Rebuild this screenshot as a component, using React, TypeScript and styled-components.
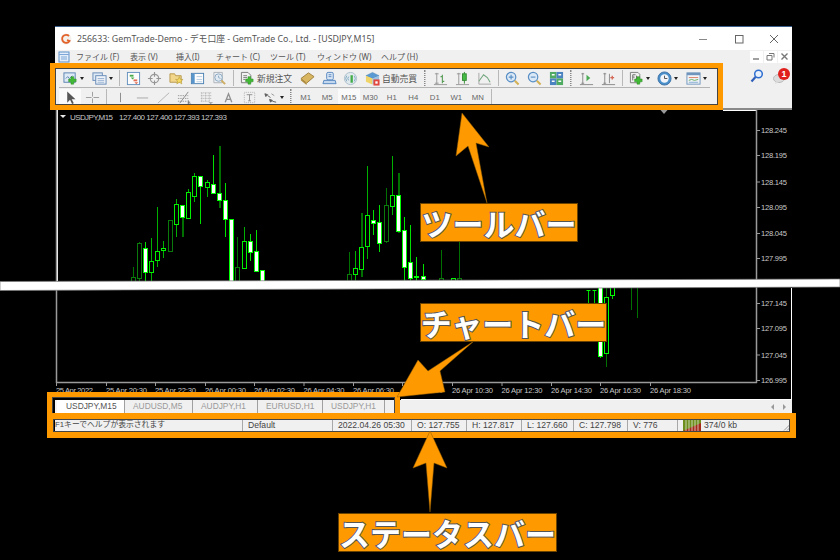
import React from "react";
import styled, { createGlobalStyle } from "styled-components";

const ORANGE = "#ff9900";
const UI_FONT = `"Noto Sans", "Noto Sans CJK JP", sans-serif`;

const GlobalStyle = createGlobalStyle`
  html, body {
    margin: 0;
    padding: 0;
    background: #000;
    width: 840px;
    height: 560px;
    overflow: hidden;
  }
`;

const Page = styled.div`
  position: relative;
  width: 840px;
  height: 560px;
  background: #000;
  padding: 26px 0 0 55px;
  box-sizing: border-box;
  font-family: ${UI_FONT};
`;

const Window = styled.div`
  width: 737px;
  display: flex;
  flex-direction: column;
`;

const TitleBar = styled.div`
  height: 24px;
  background: #fff;
  border-top: 1px solid #3a5f8c;
  box-sizing: border-box;
  display: flex;
  align-items: center;
  padding-left: 5px;
  font-size: 8.8px;
  color: #555;
`;

const TitleText = styled.span`
  margin-left: 5px;
  flex: 1;
  white-space: nowrap;
`;

const WinControl = styled.div`
  width: 35.5px;
  height: 23px;
  display: flex;
  align-items: center;
  justify-content: center;
`;

const MenuBar = styled.div`
  height: 13px;
  background: #f0f0f0;
  display: flex;
  align-items: center;
  padding-left: 3px;
  font-size: 8px;
  color: #555;
`;

const MenuItem = styled.div<{ $w: number }>`
  width: ${(p) => p.$w}px;
  white-space: nowrap;
`;

const MdiButtons = styled.div`
  margin-left: auto;
  display: flex;
  gap: 1px;
  padding-right: 1px;
`;

const MdiButton = styled.div`
  width: 13px;
  height: 12px;
  background: #fff;
  display: flex;
  align-items: center;
  justify-content: center;
`;

const ToolArea = styled.div`
  height: 47px;
  background: #f0f0f0;
  border-bottom: 2px solid #8a8a8a;
  box-sizing: border-box;
  display: flex;
`;

const ToolRows = styled.div`
  width: 655px;
  padding: 6px 0 0 4px;
  display: flex;
  flex-direction: column;
`;

const ToolRow = styled.div<{ $w: number; $line?: boolean }>`
  width: ${(p) => p.$w}px;
  height: 18px;
  display: flex;
  align-items: center;
  flex-shrink: 0;
  border-bottom: ${(p) => (p.$line ? "1px solid #b4b4b4" : "none")};
`;

const ToolButton = styled.div<{ $w: number; $active?: boolean }>`
  width: ${(p) => p.$w}px;
  height: 17px;
  flex-shrink: 0;
  display: flex;
  align-items: center;
  justify-content: center;
  gap: 2px;
  font-size: 8.8px;
  color: #555;
  background: ${(p) => (p.$active ? "#fafafa" : "transparent")};
  white-space: nowrap;

  svg {
    width: 15px;
    height: 15px;
    opacity: 0.85;
  }
`;

const Period = styled(ToolButton)`
  font-family: "Liberation Sans", sans-serif;
  font-size: 7.8px;
  color: #666;
`;

const Separator = styled.div`
  width: 1px;
  height: 16px;
  background: #b8b8b8;
  margin: 0 2.5px;
  flex-shrink: 0;
`;

const Grip = styled.div`
  width: 2px;
  height: 16px;
  margin: 0 3px;
  flex-shrink: 0;
  border-left: 1px dotted #888;
  border-right: 1px dotted #bbb;
  box-sizing: border-box;
`;

const DropArrow = styled.span`
  width: 0;
  height: 0;
  border-left: 2.5px solid transparent;
  border-right: 2.5px solid transparent;
  border-top: 3px solid #222;
`;

const ToolEnd = styled.div`
  flex: 1;
  display: flex;
  padding: 6px 0 0 36px;
  gap: 9px;
  align-items: flex-start;
`;

const Bubble = styled.div`
  width: 15px;
  height: 14px;
  display: flex;
  position: relative;
`;

const Badge = styled.div`
  position: absolute;
  top: -1px;
  right: -2px;
  width: 12px;
  height: 12px;
  border-radius: 50%;
  background: #e0201c;
  color: #fff;
  font: bold 9px/12px "Liberation Sans", sans-serif;
  text-align: center;
`;

const ChartArea = styled.div`
  height: 290px;
  background: #000;
  line-height: 0;
`;

const TabBar = styled.div`
  height: 13px;
  background: #f0f0f0;
  display: flex;
  font: 8.4px/13px "Liberation Sans", sans-serif;
`;

const Tab = styled.div<{ $w: number; $active?: boolean }>`
  width: ${(p) => p.$w}px;
  box-sizing: border-box;
  padding-left: ${(p) => (p.$active ? 9 : 8)}px;
  background: ${(p) => (p.$active ? "#fff" : "#f0f0f0")};
  color: ${(p) => (p.$active ? "#555" : "#999")};
  border-right: 1px solid #a0a0a0;
  white-space: nowrap;
`;

const TabLead = styled.div`
  width: 2px;
  background: #f4f4f4;
`;

const TabScroll = styled.div`
  margin-left: auto;
  display: flex;
  align-items: center;
  gap: 9px;
  padding-right: 6px;
`;

const ScrollArrow = styled.span<{ $right?: boolean }>`
  width: 0;
  height: 0;
  border-top: 3px solid transparent;
  border-bottom: 3px solid transparent;
  border-left: ${(p) => (p.$right ? "3px solid #999" : "none")};
  border-right: ${(p) => (p.$right ? "none" : "3px solid #999")};
`;

const StatusBar = styled.div`
  margin-top: 6px;
  height: 12px;
  background: #f0f0f0;
  display: flex;
  font: 8.6px/12px "Liberation Sans", "Noto Sans CJK JP", sans-serif;
  color: #444;
`;

const StatusCell = styled.div<{ $w: number; $last?: boolean }>`
  width: ${(p) => p.$w}px;
  flex-shrink: 0;
  box-sizing: border-box;
  padding-left: 5px;
  border-right: ${(p) => (p.$last ? "none" : "1px solid #a8a8a8")};
  white-space: nowrap;
  display: flex;
  align-items: center;
  gap: 3px;
`;

const HelpCell = styled(StatusCell)`
  padding-left: 0;
  font-family: "Liberation Sans", "Noto Sans CJK JP", sans-serif;
  font-size: 7.8px;
`;

const StatusGrip = styled.div`
  margin-left: auto;
  align-self: flex-end;
  line-height: 0;
`;

// annotations laid over the screenshot
const Frame = styled.div<{ $x: number; $y: number; $w: number; $h: number; $b: number }>`
  position: absolute;
  left: ${(p) => p.$x}px;
  top: ${(p) => p.$y}px;
  width: ${(p) => p.$w}px;
  height: ${(p) => p.$h}px;
  box-sizing: border-box;
  border: ${(p) => p.$b}px solid ${ORANGE};
  box-shadow: inset 0 0 0 1px #444;
`;

const Callout = styled.div<{ $x: number; $y: number; $w: number }>`
  position: absolute;
  left: ${(p) => p.$x}px;
  top: ${(p) => p.$y}px;
  width: ${(p) => p.$w}px;
  height: 39px;
  box-sizing: border-box;
  background: ${ORANGE};
  border: 1px solid #6b4300;
  display: flex;
  align-items: center;
  justify-content: center;
  font: 700 31px/37px "Noto Sans CJK JP", sans-serif;
  color: #fff;
  white-space: nowrap;
  -webkit-text-stroke: 2px #555;
  paint-order: stroke fill;
`;

const Overlay = styled.svg`
  position: absolute;
  left: 0;
  top: 0;
  width: 840px;
  height: 560px;
  pointer-events: none;
`;

const AxisText = styled.text`
  font: 7.6px "Liberation Sans", sans-serif;
  fill: #c8c8c8;
`;

const HeaderText = styled.text`
  font: 8px "Liberation Sans", sans-serif;
  fill: #c8c8c8;
`;

const Plus = ({ x = 7, y = 7 }: { x?: number; y?: number }) => (
  <path
    d={`M${x + 2.5} ${y}h3v2.5h2.5v3h-2.5v2.5h-3v-2.5h-2.5v-3h2.5z`}
    fill="#22b014"
    stroke="#0e7a08"
    strokeWidth=".5"
  />
);

const Svg = ({ children, size = 16 }: { children: React.ReactNode; size?: number }) => (
  <svg width={size} height={size} viewBox="0 0 16 16" fill="none">
    {children}
  </svg>
);

const icons: Record<string, React.ReactNode> = {
  newChart: (
    <Svg>
      <rect x="1" y="2" width="12" height="10" fill="#dce9f7" stroke="#3f6fa8" />
      <path d="M3 8l2-2 2 2 3-3" stroke="#3f6fa8" />
      <Plus x={6} y={6} />
    </Svg>
  ),
  profiles: (
    <Svg>
      <rect x="1" y="2" width="10" height="8" fill="#dce9f7" stroke="#4d78ad" />
      <rect x="4" y="5" width="11" height="9" fill="#eef4fb" stroke="#4d78ad" />
      <path d="M6 8h7M6 10h7M6 12h7" stroke="#8aa8cc" />
    </Svg>
  ),
  market: (
    <Svg>
      <rect x="1.5" y="1.5" width="13" height="13" fill="#fff" stroke="#4a7fb5" />
      <path d="M4 4h4v2h-4z" fill="#2ca02c" />
      <path d="M5 7l2 2 2-2z" fill="#2ca02c" />
      <path d="M8 9h4v2h-4z" fill="#e0583c" />
      <path d="M9 12l2 2 2-2z" fill="#e0583c" />
    </Svg>
  ),
  navigator: (
    <Svg>
      <circle cx="8" cy="8" r="4.5" stroke="#8c8c8c" strokeWidth="1.3" />
      <path d="M8 1v5M8 10v5M1 8h5M10 8h5" stroke="#858585" strokeWidth="1.2" />
    </Svg>
  ),
  folderStar: (
    <Svg>
      <path d="M1 3h5l1 2h6v7H1z" fill="#f2d27a" stroke="#b08a30" />
      <path d="M11 6l1.3 3H15l-2.2 1.8.9 3-2.7-1.8-2.7 1.8.9-3L7 9h2.7z" fill="#f6d548" stroke="#a88a1c" strokeWidth=".6" />
    </Svg>
  ),
  terminal: (
    <Svg>
      <rect x="1.5" y="2.5" width="13" height="11" fill="#fff" stroke="#2f6ea8" />
      <rect x="2" y="3" width="3" height="10" fill="#3d86c6" />
      <path d="M7 6h6M7 9h6M7 11.5h6" stroke="#a9c4de" />
    </Svg>
  ),
  tester: (
    <Svg>
      <path d="M2 1.5h9v11H2z" fill="#eef2f6" stroke="#a0a8b0" />
      <circle cx="7" cy="7" r="4" fill="#dfeaf4" stroke="#7a9cb8" />
      <path d="M7 5v2l2 1" stroke="#7a9cb8" />
      <path d="M10 10l4 4" stroke="#c6a24a" strokeWidth="2" />
    </Svg>
  ),
  newOrder: (
    <Svg>
      <path d="M1.5 1.5h7l3 3v8h-10z" fill="#f2f2f2" stroke="#666" />
      <path d="M3.5 5h4M3.5 7h4M3.5 9h2" stroke="#666" />
      <Plus x={6} y={6} />
    </Svg>
  ),
  gold: (
    <Svg>
      <path d="M1 8l8-6 6 4-8 7z" fill="#d6ac4a" stroke="#8f6b1c" />
      <path d="M1 8l6 5v2l-6-5z" fill="#a57f26" />
    </Svg>
  ),
  mail: (
    <Svg>
      <rect x="5" y="1.5" width="7" height="8" rx="1.5" fill="#d8e6f6" stroke="#3a73b8" />
      <path d="M7 4h3M7 6h3" stroke="#3a73b8" />
      <path d="M2 10h12l1 3.5H1z" fill="#bcd4ee" stroke="#3a73b8" />
    </Svg>
  ),
  signal: (
    <Svg>
      <circle cx="8" cy="8" r="6.5" fill="#dfe9ef" stroke="#9fb6c4" />
      <path d="M4 5a5 5 0 0 0 0 6M6 6a3 3 0 0 0 0 4M12 5a5 5 0 0 1 0 6" stroke="#6b9bb8" />
      <path d="M8 4.5h2.5v8H8z" fill="#26a02e" />
    </Svg>
  ),
  auto: (
    <Svg>
      <path d="M1 5l7-3.5 7 3.5-7 3z" fill="#3f8cd0" stroke="#2c6aa3" strokeWidth=".5" />
      <path d="M1 5l7 3v6.5l-7-3z" fill="#f0d050" />
      <path d="M15 5l-7 3v6.5l7-3z" fill="#8fbbe2" />
      <rect x="9" y="9" width="6.5" height="6.5" fill="#e02a20" />
      <rect x="11" y="11" width="2.5" height="2.5" fill="#fff" />
    </Svg>
  ),
  bars: (
    <Svg>
      <path d="M4 2v12M2 3h4M2 13h4M1 14.5h14" stroke="#8a8a8a" />
      <path d="M10 4v9M8 6h2M10 11h2" stroke="#3f8f3f" strokeWidth="1.2" />
    </Svg>
  ),
  candle: (
    <Svg>
      <path d="M4 2v12M2 3h4M1 14.5h14" stroke="#8a8a8a" />
      <rect x="8" y="3" width="4" height="7" fill="#28b428" stroke="#137a13" />
      <path d="M10 1v2M10 10v3.5" stroke="#137a13" />
    </Svg>
  ),
  line: (
    <Svg>
      <path d="M2 2v12h13" stroke="#9a9a9a" />
      <path d="M2 11l5-7 4 3 3 5" stroke="#5d9a6a" strokeWidth="1.1" />
    </Svg>
  ),
  zoomIn: (
    <Svg>
      <circle cx="6.5" cy="6.5" r="5" fill="#d8e8f8" stroke="#3f7fbf" strokeWidth="1.3" />
      <path d="M4 6.5h5M6.5 4v5" stroke="#3f7fbf" strokeWidth="1.2" />
      <path d="M10.5 10.5l4 4" stroke="#cfa83c" strokeWidth="2.2" />
    </Svg>
  ),
  zoomOut: (
    <Svg>
      <circle cx="6.5" cy="6.5" r="5" fill="#d8e8f8" stroke="#3f7fbf" strokeWidth="1.3" />
      <path d="M4 6.5h5" stroke="#3f7fbf" strokeWidth="1.2" />
      <path d="M10.5 10.5l4 4" stroke="#cfa83c" strokeWidth="2.2" />
    </Svg>
  ),
  tile: (
    <Svg>
      <rect x="1" y="1" width="7" height="7" fill="#35a04a" />
      <rect x="8" y="1" width="7" height="7" fill="#2f6fb8" />
      <rect x="1" y="8" width="7" height="7" fill="#2f6fb8" />
      <rect x="8" y="8" width="7" height="7" fill="#35a04a" />
      <path d="M3 4h3M10 4h3M3 11h3M10 11h3" stroke="#fff" strokeWidth="1.5" />
    </Svg>
  ),
  shift: (
    <Svg>
      <path d="M4 2v12M1 14.5h14M2.5 3h3M2.5 13h3" stroke="#777" />
      <path d="M8 4l4 3.5-4 3.5z" fill="#2fa03a" />
    </Svg>
  ),
  autoscroll: (
    <Svg>
      <path d="M4 2v12M1 14.5h14M2.5 3h3M2.5 13h3M9 3v10" stroke="#777" />
      <path d="M10 7h4M12 5v4" stroke="#d0503a" strokeWidth="1.4" />
    </Svg>
  ),
  indicators: (
    <Svg>
      <path d="M1.5 1.5h8l2 2v9h-10z" fill="#efefef" stroke="#6a6a6a" />
      <path d="M4 4v6M4 4h3M4 6.5h2M8 5v4" stroke="#555" />
      <Plus x={6} y={6} />
    </Svg>
  ),
  clock: (
    <Svg>
      <circle cx="8" cy="8" r="7" fill="#2f7fc4" stroke="#1f5f9c" />
      <circle cx="8" cy="8" r="4.5" fill="#f2f7fc" />
      <path d="M8 5v3h3" stroke="#333" />
    </Svg>
  ),
  template: (
    <Svg>
      <rect x="1" y="2" width="14" height="12" fill="#f4f7fa" stroke="#5a86b4" />
      <rect x="1" y="2" width="14" height="2.5" fill="#5a86b4" />
      <path d="M3 7h10" stroke="#d86a4a" />
      <path d="M3 10l3-1 3 1 4-1" stroke="#4aa04a" />
      <path d="M3 12h10" stroke="#6f9ccf" />
    </Svg>
  ),
  cursor: (
    <Svg>
      <path d="M4.5 1.5v12l3-3 2.2 4.5 1.8-.9-2.2-4.3h4z" fill="#3a3a3a" />
    </Svg>
  ),
  cross: (
    <Svg>
      <path d="M8 2v5M8 9v5M1 8h6M9 8h6" stroke="#8d8d8d" />
    </Svg>
  ),
  vline: (
    <Svg>
      <path d="M8 3v10" stroke="#777" />
    </Svg>
  ),
  hline: (
    <Svg>
      <path d="M2 8.5h12" stroke="#9a9a9a" />
    </Svg>
  ),
  trend: (
    <Svg>
      <path d="M2 14L14 3" stroke="#a8a8a8" />
    </Svg>
  ),
  fib: (
    <Svg>
      <path d="M1 6h11M1 9h11M1 12h10" stroke="#8a8a8a" strokeDasharray="1.5 1" />
      <path d="M3 14L12 2" stroke="#777" />
      <path d="M12 11v4h3M12 13h2" stroke="#555" />
    </Svg>
  ),
  grid: (
    <Svg>
      <path d="M2 3h12M2 6h12M2 9h12M2 12h9M3 3v9M7 3v9M11 3v9" stroke="#a0a0a0" strokeDasharray="1 1" />
      <path d="M10 13h5l-2.5 2z" fill="#888" />
    </Svg>
  ),
  textLabel: (
    <Svg>
      <path d="M4.5 13L8 4l3.5 9M5.8 10h4.4" stroke="#808080" strokeWidth="1.4" />
    </Svg>
  ),
  textBox: (
    <Svg>
      <rect x="2.5" y="2.5" width="11" height="11" stroke="#a8a8a8" strokeDasharray="1 1" />
      <path d="M5 5h6M8 5v6.5M6.5 11.5h3" stroke="#808080" />
    </Svg>
  ),
  arrows: (
    <Svg>
      <path d="M2 4l3 1-2 2zM5 6l3 2" fill="#444" stroke="#444" />
      <path d="M7 10l3 1-2 2zM10 12l4 1" fill="#444" stroke="#444" />
      <path d="M9 4l3 2" stroke="#888" />
    </Svg>
  ),
};

const Icon = ({ name }: { name: string }) => <>{icons[name]}</>;

type ToolDef = [string, number, boolean?];

const Tools = ({ items }: { items: ToolDef[] }) => (
  <>
    {items.map(([name, w, drop]) => (
      <ToolButton key={name} $w={w}>
        <Icon name={name} />
        {drop && <DropArrow />}
      </ToolButton>
    ))}
  </>
);

const menu: [string, number][] = [
  ["ファイル (F)", 54],
  ["表示 (V)", 46],
  ["挿入(I)", 40],
  ["チャート (C)", 54],
  ["ツール (T)", 47],
  ["ウィンドウ (W)", 64],
  ["ヘルプ (H)", 50],
];

const periods = ["M1", "M5", "M15", "M30", "H1", "H4", "D1", "W1", "MN"];

const tabs: [string, number][] = [
  ["AUDUSD,M5", 68],
  ["AUDJPY,H1", 65],
  ["EURUSD,H1", 65],
  ["USDJPY,H1", 62],
];

// x, wick top, wick bottom, body top, body bottom, kind (w = white body, b = bright outline, d = dark outline)
type Candle = [number, number, number, number, number, string];

const upperCandles: Candle[] = [
  [278, 470, 520, 500, 520, "d"], [296, 396, 520, 400, 505, "d"], [315, 397, 520, 415, 485, "w"],
  [333, 385, 520, 452, 485, "b"], [351, 290, 472, 422, 450, "b"], [370, 392, 445, 414, 419, "b"],
  [389, 330, 422, 330, 422, "d"], [407, 268, 382, 283, 342, "b"], [425, 285, 380, 286, 322, "w"],
  [444, 238, 323, 247, 323, "b"], [462, 188, 275, 198, 257, "b"], [481, 198, 342, 198, 228, "w"],
  [500, 210, 260, 217, 230, "b"], [518, 135, 250, 223, 250, "w"], [537, 107, 293, 250, 270, "w"],
  [555, 218, 382, 270, 328, "w"], [573, 328, 520, 328, 520, "w"], [592, 382, 520, 472, 520, "d"],
  [611, 350, 473, 392, 473, "b"], [629, 372, 452, 392, 425, "w"], [648, 360, 482, 424, 482, "w"],
  [666, 480, 520, 480, 520, "w"], [926, 427, 520, 492, 520, "d"], [945, 423, 520, 475, 491, "b"],
  [963, 310, 500, 412, 476, "b"], [981, 167, 447, 316, 407, "b"], [1000, 300, 375, 331, 338, "w"],
  [1018, 285, 425, 337, 400, "w"], [1037, 235, 398, 286, 393, "d"], [1055, 137, 315, 256, 287, "b"],
  [1074, 190, 370, 256, 363, "w"], [1092, 322, 520, 360, 470, "w"], [1111, 345, 520, 455, 505, "w"],
  [1129, 442, 520, 497, 501, "w"], [1148, 462, 520, 499, 508, "w"], [1203, 420, 520, 505, 520, "d"],
  [1240, 505, 520, 505, 520, "b"], [1258, 395, 520, 505, 520, "d"],
];

// these candles have a dark, heavier wick in the reference
const heavyWicks = new Set([425, 537, 963, 1074]);

const wickColor: Record<string, string> = { w: "#00e000", b: "#00b000", d: "#007000" };
const edgeColor: Record<string, string> = { w: "#00ff00", b: "#00f000", d: "#0a7a0a" };

// lower part of the chart sits under the torn strip
const lowerCandles: Candle[] = [
  [588.5, 290, 303, 290, 290, "b"],
  [594.5, 290, 303, 290, 290, "b"],
  [600.5, 285, 358, 285, 356, "w"],
  [606.5, 285, 367, 297, 353, "d2"],
  [612.5, 285, 299, 285, 295, "b"],
  [631.5, 285, 310, 285, 285, "d"],
  [637.5, 285, 318, 285, 285, "d"],
];

const priceLabels: [string, number][] = [
  ["128.245", 130], ["128.195", 155], ["128.145", 181.5], ["128.095", 207], ["128.045", 233], ["127.995", 258],
  ["127.145", 303], ["127.095", 328], ["127.045", 354.5], ["126.995", 380],
];

const timeLabels: [string, number][] = [
  ["25 Apr 2022", 56], ["25 Apr 20:30", 106], ["25 Apr 22:30", 155], ["26 Apr 00:30", 205], ["26 Apr 02:30", 254],
  ["26 Apr 04:30", 303.5], ["26 Apr 06:30", 353], ["26 Apr 08:30", 402], ["26 Apr 10:30", 452], ["26 Apr 12:30", 501.5],
  ["26 Apr 14:30", 551], ["26 Apr 16:30", 600], ["26 Apr 18:30", 650],
];

const Chart = () => (
  // page coordinates, shifted into the chart box by the viewBox
  <svg width="737" height="290" viewBox="55 110 737 290">
    <rect x="55" y="110" width="737" height="290" fill="#000" />
    <path d="M723 110.5h34" stroke="#fff" />
    <path d="M56.5 110v273M756.5 110v273M56 382.5h701" stroke="#9a9a9a" strokeWidth="1.5" />
    <path d="M57.5 110v171" stroke="#e8e8e8" />
    <path d="M401 399.5h391M791.5 288v111" stroke="#fff" />
    <path d="M660.5 110h7l-3.5 4z" fill="#9a9a9a" />

    {upperCandles.map(([x, wt, wb, bt, bb, kind]) => {
      const cx = Math.round(40 + x / 3) + 0.5;
      const top = Math.round(110 + bt / 3) + 0.5;
      const bottom = Math.round(110 + bb / 3) + 0.5;
      const heavy = heavyWicks.has(x);
      return (
        <g key={x} shapeRendering="crispEdges">
          <path
            d={`M${cx} ${Math.round(110 + wt / 3)}V${Math.round(110 + wb / 3)}`}
            stroke={heavy ? "#007000" : wickColor[kind]}
            strokeWidth={heavy ? 2 : 1}
          />
          <rect
            x={cx - 2}
            y={top}
            width="4"
            height={Math.max(bottom - top, 1)}
            fill={kind === "w" ? "#fff" : "#000"}
            stroke={edgeColor[kind]}
          />
        </g>
      );
    })}

    {lowerCandles.map(([x, wt, wb, bt, bb, kind]) => (
      <g key={x} shapeRendering="crispEdges">
        <path d={`M${x} ${wt}V${wb}`} stroke={kind.startsWith("d") ? "#007000" : "#00d000"} />
        {bb > bt && (
          <rect
            x={x - 2}
            y={bt + 0.5}
            width="4"
            height={bb - bt}
            fill={kind === "w" ? "#fff" : "#000"}
            stroke={kind === "d" ? "#0a7a0a" : "#00ff00"}
          />
        )}
      </g>
    ))}
    <path d="M586.5 290.5h4M592.5 290.5h4" stroke="#00ff00" />

    <path d="M60 115h6l-3 3z" fill="#e8e8e8" />
    <HeaderText x="70" y="120" textLength="43">
      USDJPY,M15
    </HeaderText>
    <HeaderText x="119" y="120" textLength="108">
      127.400 127.400 127.393 127.393
    </HeaderText>

    {priceLabels.map(([label, y]) => (
      <g key={label}>
        <path d={`M757 ${y + 0.5}h3`} stroke="#9a9a9a" />
        <AxisText x="761" y={y + 3} textLength="26">
          {label}
        </AxisText>
      </g>
    ))}
    {timeLabels.map(([label, x]) => (
      <g key={label}>
        <path d={`M${x + 0.5} 383v3`} stroke="#9a9a9a" />
        <AxisText x={x} y="393" textLength={label.length === 11 ? 37 : 41}>
          {label}
        </AxisText>
      </g>
    ))}
  </svg>
);

const VolumeBars = () => (
  <svg width="18" height="11" viewBox="0 0 18 11">
    <rect width="18" height="11" fill="#6e8f1c" />
    <path d="M0 11L18 3V11z" fill="#a52a1a" />
    <path d="M3 0v11M6 0v11M9 0v11M12 0v11M15 0v11" stroke="#f0f0f0" strokeWidth=".7" />
  </svg>
);

const App = () => (
  <>
    <GlobalStyle />
    <Page>
      <Window>
        <TitleBar>
          <svg width="12" height="12" viewBox="0 0 12 12">
            <circle cx="6" cy="6" r="5.5" fill="#f4f0ec" />
            <path d="M9 3A4 4 0 1 0 9.5 8L7 7" stroke="#e2622a" strokeWidth="1.8" fill="none" />
          </svg>
          <TitleText>256633: GemTrade-Demo - デモ口座 - GemTrade Co., Ltd. - [USDJPY,M15]</TitleText>
          <WinControl>
            <svg width="10" height="10" viewBox="0 0 10 10">
              <path d="M1 5.5h8" stroke="#888" />
            </svg>
          </WinControl>
          <WinControl>
            <svg width="10" height="10" viewBox="0 0 10 10">
              <rect x="1.5" y="1.5" width="7.5" height="7.5" stroke="#666" fill="none" />
            </svg>
          </WinControl>
          <WinControl>
            <svg width="10" height="10" viewBox="0 0 10 10">
              <path d="M1 1l8 8M9 1l-8 8" stroke="#666" />
            </svg>
          </WinControl>
        </TitleBar>

        <MenuBar>
          <svg width="12" height="12" viewBox="0 0 12 12" style={{ marginRight: 6 }}>
            <rect x="1" y="1" width="10" height="10" fill="#e4eefa" stroke="#5f8fc8" />
            <path d="M1 3.5h10M3 6h6M3 8h6" stroke="#7fa6d6" />
          </svg>
          {menu.map(([label, w]) => (
            <MenuItem key={label} $w={w}>
              {label}
            </MenuItem>
          ))}
          <MdiButtons>
            <MdiButton>
              <svg width="9" height="9" viewBox="0 0 9 9">
                <path d="M1 7h6" stroke="#777" strokeWidth="1.4" />
              </svg>
            </MdiButton>
            <MdiButton>
              <svg width="9" height="9" viewBox="0 0 9 9">
                <path d="M3 1.5h5v4M1 3.5h5v4.5H1z" stroke="#777" fill="none" />
              </svg>
            </MdiButton>
            <MdiButton>
              <svg width="9" height="9" viewBox="0 0 9 9">
                <path d="M1.5 1.5l6 6M7.5 1.5l-6 6" stroke="#777" strokeWidth="1.4" />
              </svg>
            </MdiButton>
          </MdiButtons>
        </MenuBar>

        <ToolArea>
          <ToolRows>
            <ToolRow $w={651} $line>
              <Tools items={[["newChart", 29, true], ["profiles", 28, true]]} />
              <Separator />
              <Tools items={[["market", 22], ["navigator", 21.5], ["folderStar", 21.5], ["terminal", 21.5], ["tester", 21.5]]} />
              <Separator />
              <ToolButton $w={60}>
                <Icon name="newOrder" />
                新規注文
              </ToolButton>
              <Tools items={[["gold", 22], ["mail", 22], ["signal", 21]]} />
              <ToolButton $w={60}>
                <Icon name="auto" />
                自動売買
              </ToolButton>
              <Grip />
              <Tools items={[["bars", 22], ["candle", 22], ["line", 22]]} />
              <Separator />
              <Tools items={[["zoomIn", 22], ["zoomOut", 22], ["tile", 22]]} />
              <Grip />
              <Tools items={[["shift", 22], ["autoscroll", 22]]} />
              <Separator />
              <Tools items={[["indicators", 28, true], ["clock", 28, true], ["template", 30, true]]} />
            </ToolRow>
            <ToolRow $w={433}>
              <ToolButton $w={22} $active>
                <Icon name="cursor" />
              </ToolButton>
              <Tools items={[["cross", 22]]} />
              <Separator />
              <Tools
                items={[
                  ["vline", 22], ["hline", 22], ["trend", 21], ["fib", 21], ["grid", 22],
                  ["textLabel", 22], ["textBox", 21], ["arrows", 27, true],
                ]}
              />
              <Grip />
              {periods.map((p) => (
                <Period key={p} $w={21.5} $active={p === "M15"}>
                  {p}
                </Period>
              ))}
              <Separator />
            </ToolRow>
          </ToolRows>
          <ToolEnd>
            <svg width="14" height="14" viewBox="0 0 14 14">
              <circle cx="8.5" cy="5" r="3.8" fill="#e8f0fb" stroke="#2f6fd0" strokeWidth="1.5" />
              <path d="M5.5 8L1.5 12.5" stroke="#2f5fb8" strokeWidth="2.2" />
            </svg>
            <Bubble>
              <svg width="12" height="12" viewBox="0 0 12 12" style={{ marginTop: 4 }}>
                <ellipse cx="6" cy="5.5" rx="5.5" ry="4" fill="#dcdcdc" stroke="#bbb" />
                <path d="M3 8l-1 3 4-2z" fill="#dcdcdc" />
              </svg>
              <Badge>1</Badge>
            </Bubble>
          </ToolEnd>
        </ToolArea>

        <ChartArea>
          <Chart />
        </ChartArea>

        <TabBar>
          <TabLead />
          <Tab $w={68} $active>
            USDJPY,M15
          </Tab>
          {tabs.map(([label, w]) => (
            <Tab key={label} $w={w}>
              {label}
            </Tab>
          ))}
          <TabScroll>
            <ScrollArrow />
            <ScrollArrow $right />
          </TabScroll>
        </TabBar>

        <StatusBar>
          <HelpCell $w={188}>F1キーでヘルプが表示されます</HelpCell>
          <StatusCell $w={90}>Default</StatusCell>
          <StatusCell $w={79}>2022.04.26 05:30</StatusCell>
          <StatusCell $w={55}>O: 127.755</StatusCell>
          <StatusCell $w={55}>H: 127.817</StatusCell>
          <StatusCell $w={52}>L: 127.660</StatusCell>
          <StatusCell $w={54}>C: 127.798</StatusCell>
          <StatusCell $w={50}>V: 776</StatusCell>
          <StatusCell $w={70} $last>
            <VolumeBars />
            374/0 kb
          </StatusCell>
          <StatusGrip>
            <svg width="9" height="9" viewBox="0 0 9 9">
              <path d="M8.5 1L1 8.5M8.5 4L4 8.5M8.5 7L7 8.5" stroke="#999" />
            </svg>
          </StatusGrip>
        </StatusBar>
      </Window>

      <Overlay viewBox="0 0 840 560">
        <path d="M0 281.5L840 279V287L0 290.5z" fill="#fff" stroke="#777" strokeWidth=".7" />
      </Overlay>

      <Frame $x={50} $y={63} $w={673} $h={47} $b={5.5} />
      <Frame $x={47} $y={392} $w={353} $h={27} $b={5.5} />
      <Frame $x={47} $y={413} $w={749} $h={24.5} $b={6} />

      <Overlay viewBox="0 0 840 560">
        <g fill={ORANGE} stroke="#8a5a00" strokeWidth=".5">
          <path d="M462 113L489 147 476 143 487 203 468 146 456 156z" />
          <path d="M397 397L418 360 428 371 474 341 440 371 445 392z" />
          <path d="M430 431L447 468 434 463 430 512 426 463 413 468z" />
        </g>
      </Overlay>

      <Callout $x={420} $y={203} $w={158}>ツールバー</Callout>
      <Callout $x={420} $y={303} $w={187}>チャートバー</Callout>
      <Callout $x={338} $y={513} $w={219}>ステータスバー</Callout>
    </Page>
  </>
);

export default App;
